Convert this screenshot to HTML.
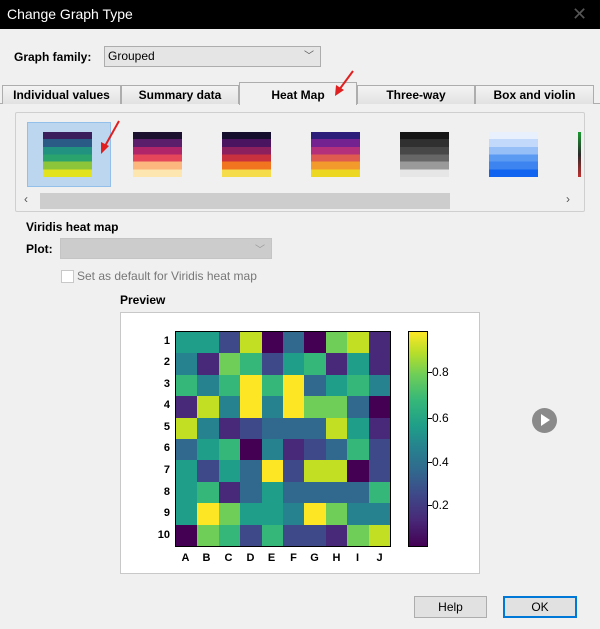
<!DOCTYPE html>
<html><head><meta charset="utf-8"><style>
*{box-sizing:border-box;margin:0;padding:0}
body{width:600px;height:629px;background:#f0f0f0;font-family:"Liberation Sans",sans-serif;font-size:12px;color:#000;position:relative;overflow:hidden}
.a{position:absolute}
.b{font-weight:bold}
.tab{position:absolute;top:85px;height:19px;border:1px solid #adadad;border-bottom:none;background:linear-gradient(#f4f4f4,#e2e2e2);font-weight:bold;text-align:center;line-height:18px;font-size:12px}
.th{position:absolute;top:132px;width:49px;height:45px}
.hm{position:absolute;left:175px;top:331px;width:216px;height:216px;display:grid;grid-template-columns:repeat(10,1fr);grid-template-rows:repeat(10,1fr);border:1px solid #000}
.p{background:#440154}.q{background:#482878}.i{background:#3e4989}.b2{background:#31688e}.c{background:#26828e}.t{background:#1f9e89}.g{background:#35b779}.l{background:#6ece58}.y{background:#c2df23}.Y{background:#fde725}
.yl{position:absolute;left:150px;width:20px;text-align:right;font-weight:bold;font-size:11px}
.xl{position:absolute;top:552px;width:21px;text-align:center;font-weight:bold;font-size:11px}
.tk{position:absolute;height:1px;width:4px;background:#000}
</style></head><body>
<div class="a" style="left:0;top:0;width:600px;height:29px;background:#000;color:#fff;font-size:14px;line-height:29px;padding-left:7px">Change Graph Type</div>
<div class="a" style="left:572px;top:4px;color:#555;font-size:18px">✕</div>
<div class="a b" style="left:14px;top:50px">Graph family:</div>
<div class="a" style="left:104px;top:46px;width:217px;height:21px;border:1px solid #adadad;background:#e5e5e5;padding-left:3px;line-height:19px">Grouped<span style="position:absolute;right:6px;top:0;color:#555;font-size:10px">﹀</span></div>
<div class="a" style="left:0;top:103px;width:600px;border-top:1px solid #adadad"></div>
<div class="tab" style="left:2px;width:119px">Individual values</div>
<div class="tab" style="left:121px;width:118px">Summary data</div>
<div class="tab" style="left:239px;width:118px;top:82px;height:23px;background:#f0f0f0;line-height:24px">Heat Map</div>
<div class="tab" style="left:357px;width:118px">Three-way</div>
<div class="tab" style="left:475px;width:119px">Box and violin</div>
<div class="a" style="left:15px;top:112px;width:570px;height:100px;border:1px solid #cfcfcf;border-radius:2px;background:#f0f0f0;overflow:hidden">
<div class="a" style="left:11px;top:9px;width:84px;height:65px;background:#bcd6ef;border:1px solid #92c0ea"></div>
<div class="th" style="left:27px;top:19px;background:linear-gradient(#3b1f5c 0 16%,#2a5b86 16% 33%,#20927f 33% 50%,#2ba36c 50% 66%,#8cc43a 66% 83%,#e3e21e 83%)"></div>
<div class="th" style="left:117px;top:19px;background:linear-gradient(#1c1230 0 16%,#5b1e6a 16% 33%,#b0256a 33% 50%,#e5465a 50% 66%,#fbb77d 66% 83%,#fde6b0 83%)"></div>
<div class="th" style="left:206px;top:19px;background:linear-gradient(#150e2c 0 16%,#4a1460 16% 33%,#8c1f5e 33% 50%,#c9313f 50% 66%,#f0751e 66% 83%,#f5dc4a 83%)"></div>
<div class="th" style="left:295px;top:19px;background:linear-gradient(#2d1d7a 0 16%,#742290 16% 33%,#b4307a 33% 50%,#df5b50 50% 66%,#f39a2c 66% 83%,#ecd822 83%)"></div>
<div class="th" style="left:384px;top:19px;background:linear-gradient(#161616 0 16%,#303030 16% 33%,#474747 33% 50%,#666 50% 66%,#9a9a9a 66% 83%,#e6e6e6 83%)"></div>
<div class="th" style="left:473px;top:19px;background:linear-gradient(#e8f0fd 0 16%,#c3d9fb 16% 33%,#96bff8 33% 50%,#5b9af3 50% 66%,#3d84f0 66% 83%,#1064ef 83%)"></div>
<div class="a" style="left:562px;top:19px;width:3px;height:45px;background:linear-gradient(#1a9a30,#2a2a2a,#c03030)"></div>
<div class="a" style="left:24px;top:80px;width:410px;height:16px;background:#cdcdcd"></div>
<div class="a" style="left:8px;top:79px;color:#555;font-size:12px">‹</div>
<div class="a" style="left:550px;top:79px;color:#555;font-size:12px">›</div>
</div>
<div class="a b" style="left:26px;top:220px">Viridis heat map</div>
<div class="a b" style="left:26px;top:242px">Plot:</div>
<div class="a" style="left:60px;top:238px;width:212px;height:21px;background:#cccccc;border:1px solid #c4c4c4"><span style="position:absolute;right:6px;top:2px;color:#999;font-size:10px">﹀</span></div>
<div class="a" style="left:61px;top:270px;width:13px;height:13px;border:1px solid #c8c8c8;background:#fff"></div>
<div class="a" style="left:77px;top:269px;color:#777">Set as default for Viridis heat map</div>
<div class="a b" style="left:120px;top:293px">Preview</div>
<div class="a" style="left:120px;top:312px;width:360px;height:262px;background:#fff;border:1px solid #c8c8c8"></div>
<div class="hm">
<div class="t"></div><div class="t"></div><div class="i"></div><div class="y"></div><div class="p"></div><div class="b2"></div><div class="p"></div><div class="l"></div><div class="y"></div><div class="q"></div>
<div class="c"></div><div class="q"></div><div class="l"></div><div class="g"></div><div class="i"></div><div class="t"></div><div class="g"></div><div class="q"></div><div class="t"></div><div class="q"></div>
<div class="g"></div><div class="c"></div><div class="g"></div><div class="Y"></div><div class="g"></div><div class="Y"></div><div class="b2"></div><div class="t"></div><div class="g"></div><div class="c"></div>
<div class="q"></div><div class="y"></div><div class="c"></div><div class="Y"></div><div class="c"></div><div class="Y"></div><div class="l"></div><div class="l"></div><div class="b2"></div><div class="p"></div>
<div class="y"></div><div class="c"></div><div class="q"></div><div class="i"></div><div class="b2"></div><div class="b2"></div><div class="b2"></div><div class="y"></div><div class="t"></div><div class="q"></div>
<div class="b2"></div><div class="t"></div><div class="g"></div><div class="p"></div><div class="c"></div><div class="q"></div><div class="i"></div><div class="b2"></div><div class="g"></div><div class="i"></div>
<div class="t"></div><div class="i"></div><div class="t"></div><div class="b2"></div><div class="Y"></div><div class="i"></div><div class="y"></div><div class="y"></div><div class="p"></div><div class="i"></div>
<div class="t"></div><div class="g"></div><div class="q"></div><div class="b2"></div><div class="t"></div><div class="b2"></div><div class="b2"></div><div class="b2"></div><div class="b2"></div><div class="g"></div>
<div class="t"></div><div class="Y"></div><div class="l"></div><div class="t"></div><div class="t"></div><div class="c"></div><div class="Y"></div><div class="l"></div><div class="c"></div><div class="c"></div>
<div class="p"></div><div class="l"></div><div class="g"></div><div class="i"></div><div class="g"></div><div class="i"></div><div class="i"></div><div class="q"></div><div class="l"></div><div class="y"></div>
</div>
<div class="yl" style="top:335px">1</div><div class="yl" style="top:356px">2</div><div class="yl" style="top:378px">3</div><div class="yl" style="top:399px">4</div><div class="yl" style="top:421px">5</div><div class="yl" style="top:442px">6</div><div class="yl" style="top:464px">7</div><div class="yl" style="top:486px">8</div><div class="yl" style="top:507px">9</div><div class="yl" style="top:529px">10</div>
<div class="xl" style="left:175px">A</div><div class="xl" style="left:196px">B</div><div class="xl" style="left:218px">C</div><div class="xl" style="left:240px">D</div><div class="xl" style="left:261px">E</div><div class="xl" style="left:283px">F</div><div class="xl" style="left:304px">G</div><div class="xl" style="left:326px">H</div><div class="xl" style="left:347px">I</div><div class="xl" style="left:369px">J</div>
<div class="a" style="left:408px;top:331px;width:20px;height:216px;border:1px solid #000;background:linear-gradient(#fde725,#b5de2b 10%,#6ece58 20%,#35b779 32%,#1f9e89 44%,#26828e 54%,#31688e 65%,#3e4989 76%,#482878 88%,#440154)"></div>
<div class="tk" style="left:428px;top:372px"></div><div class="tk" style="left:428px;top:418px"></div><div class="tk" style="left:428px;top:462px"></div><div class="tk" style="left:428px;top:505px"></div>
<div class="a" style="left:432px;top:365px">0.8</div>
<div class="a" style="left:432px;top:411px">0.6</div>
<div class="a" style="left:432px;top:455px">0.4</div>
<div class="a" style="left:432px;top:498px">0.2</div>
<div class="a" style="left:532px;top:408px;width:25px;height:25px;border-radius:50%;background:#8a8a8a"></div>
<div class="a" style="left:541px;top:414px;width:0;height:0;border-left:9px solid #fff;border-top:6.5px solid transparent;border-bottom:6.5px solid transparent"></div>
<div class="a" style="left:414px;top:596px;width:73px;height:22px;border:1px solid #adadad;background:#e1e1e1;text-align:center;line-height:20px">Help</div>
<div class="a" style="left:503px;top:596px;width:74px;height:22px;border:2px solid #0078d7;background:#e1e1e1;text-align:center;line-height:18px">OK</div>
<svg class="a" style="left:330px;top:68px" width="30" height="32"><line x1="23" y1="3" x2="9" y2="22" stroke="#e02020" stroke-width="2"/><polygon points="5,28 6,17 14,22" fill="#e02020"/></svg>
<svg class="a" style="left:94px;top:118px" width="30" height="40"><line x1="25" y1="3" x2="11" y2="28" stroke="#e02020" stroke-width="2"/><polygon points="7,36 7,24 15,28" fill="#e02020"/></svg>
</body></html>
